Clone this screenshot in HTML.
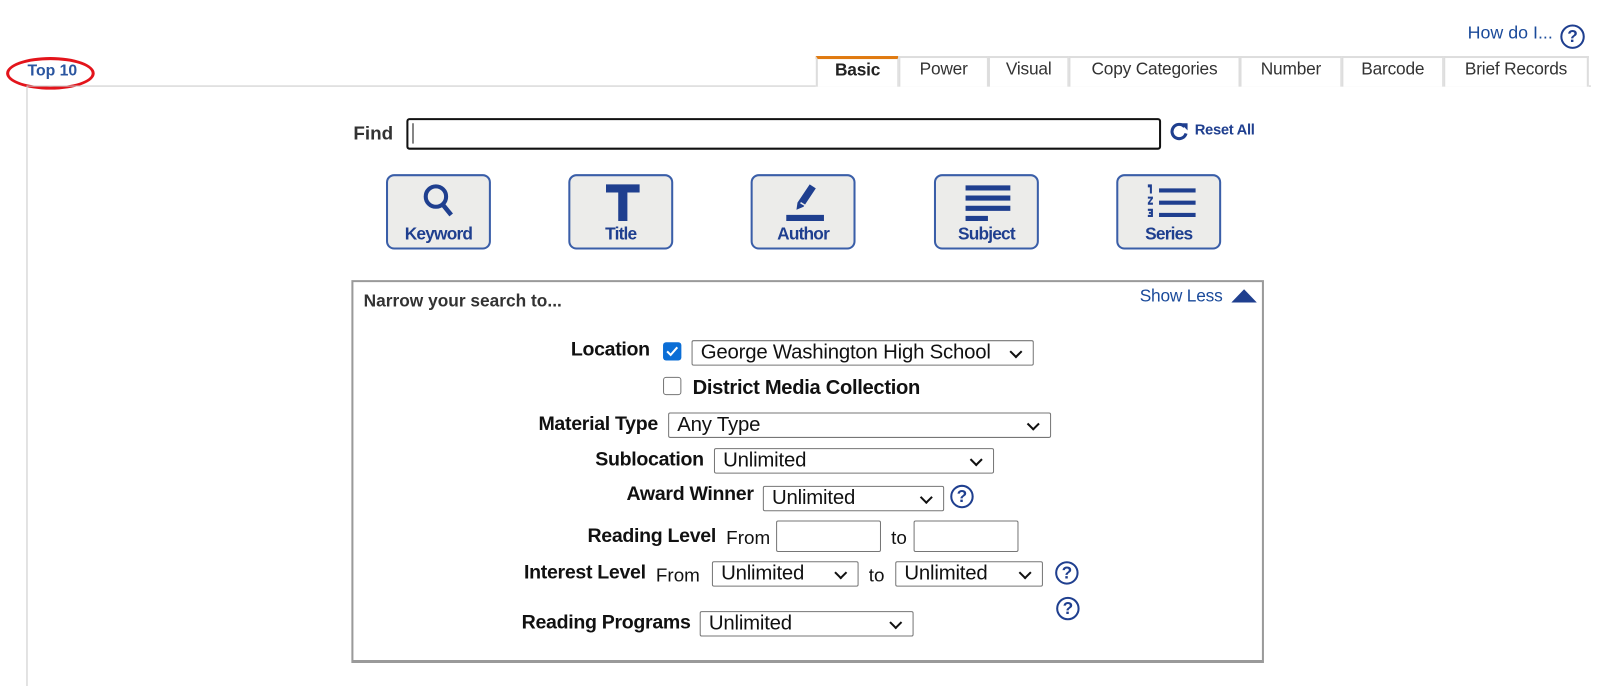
<!DOCTYPE html>
<html><head><meta charset="utf-8"><style>
*{box-sizing:border-box;margin:0;padding:0}
body{width:1597px;height:670px;background:#fff;font-family:"Liberation Sans",Arial,sans-serif;overflow:hidden;color:#000}
.w{position:relative;width:1568px;height:658px;transform:scale(1.01849);transform-origin:0 0}
.a{position:absolute;white-space:nowrap}
.tab{position:absolute;top:55px;height:30px;border:2px solid #ddd;border-bottom:none;background:#fff;font-size:17px;color:#333;text-align:center;line-height:22px;letter-spacing:-0.2px}
.btn{position:absolute;top:171px;width:103px;height:74px;border:2px solid #3a5ea8;border-radius:8px;background:#ececea}
.btn span{position:absolute;left:0;right:0;top:47px;text-align:center;font-weight:bold;font-size:17px;color:#1f3f8f;letter-spacing:-0.8px}
.btn svg{position:absolute;top:6px}
.lbl{position:absolute;font-weight:bold;font-size:19.2px;color:#111;white-space:nowrap;line-height:20px;text-align:right;letter-spacing:-0.3px}
.txt{position:absolute;font-size:18.5px;color:#111;white-space:nowrap;line-height:20px}
.sel{position:absolute;height:25px;border:1px solid #767676;border-radius:2px;background:#fff;font-size:20px;color:#111;padding-left:8px;line-height:23px;letter-spacing:-0.2px;overflow:hidden}
.sel::after{content:"";position:absolute;right:12px;top:6px;width:7px;height:7px;border-right:2px solid #111;border-bottom:2px solid #111;transform:rotate(45deg)}
.inp{position:absolute;height:31px;border:1px solid #767676;border-radius:2px;background:#fff}
.q{position:absolute;width:23px;height:23px;border:2px solid #1f3f8f;border-radius:50%;color:#1f3f8f;font-weight:bold;font-size:17px;text-align:center;line-height:19px}
</style></head><body><div class="w">
<div class="a" style="left:1441px;top:22px;font-size:17.5px;color:#1a4a9a">How do I...</div>
<div class="q" style="left:1532px;top:24px;width:24px;height:24px;line-height:20px">?</div>

<div class="a" style="left:6px;top:56px;width:87px;height:32px;border:3px solid #e3141b;border-radius:50%"></div>
<div class="a" style="left:27px;top:61px;font-size:15.5px;font-weight:bold;color:#2a55a0">Top 10</div>

<div class="a" style="left:26px;top:84px;width:1536px;height:1px;background:#c8c8c8"></div>
<div class="a" style="left:26px;top:84px;width:1px;height:590px;background:#c8c8c8"></div>

<div class="tab" style="left:801px;width:82px;border-top:3px solid #e07a10;font-weight:bold;color:#222;line-height:21px">Basic</div>
<div class="tab" style="left:882px;width:89px">Power</div>
<div class="tab" style="left:970px;width:80px">Visual</div>
<div class="tab" style="left:1049px;width:169px">Copy Categories</div>
<div class="tab" style="left:1217px;width:101px">Number</div>
<div class="tab" style="left:1317px;width:101px">Barcode</div>
<div class="tab" style="left:1417px;width:143px">Brief Records</div>

<div class="a" style="left:347px;top:120px;font-size:18.5px;font-weight:bold;color:#333">Find</div>
<div class="a" style="left:399px;top:116px;width:741px;height:31px;border:2px solid #111;border-radius:3px"></div>
<div class="a" style="left:405px;top:121px;width:1px;height:20px;background:#111"></div>
<svg class="a" style="left:1148px;top:119px" width="20" height="20" viewBox="0 0 20 20"><path d="M15 5.5A7 7 0 1 0 16.5 12" fill="none" stroke="#1f3f8f" stroke-width="3"/><path d="M11 2h7v7z" fill="#1f3f8f"/></svg>
<div class="a" style="left:1173px;top:120px;font-size:14.5px;font-weight:bold;color:#1f3f8f;letter-spacing:-0.3px">Reset All</div>

<div class="btn" style="left:379px"><svg style="left:32px" width="40" height="42" viewBox="0 0 40 42"><circle cx="15" cy="14" r="10" fill="none" stroke="#1f3f8f" stroke-width="4"/><path d="M21 21l9 11" stroke="#1f3f8f" stroke-width="4.5"/></svg><span>Keyword</span></div>
<div class="btn" style="left:558px"><svg style="left:34px" width="36" height="40" viewBox="0 0 36 40"><path d="M1 2h33v8H1zM13 2h9v36h-9z" fill="#1f3f8f"/></svg><span>Title</span></div>
<div class="btn" style="left:737px"><svg style="left:31px" width="42" height="42" viewBox="0 0 42 42"><path d="M2 32h37v6H2zM12 27l1-7 12-18 6 4-12 18z" fill="#1f3f8f"/><path d="M16 20l5 3" stroke="#ececea" stroke-width="1.5"/></svg><span>Author</span></div>
<div class="btn" style="left:917px"><svg style="left:29px" width="46" height="40" viewBox="0 0 46 40"><path d="M0 3h44v5H0zM0 13h44v5H0zM0 23h44v5H0zM0 33h22v5H0z" fill="#1f3f8f"/></svg><span>Subject</span></div>
<div class="btn" style="left:1096px"><svg style="left:28px" width="48" height="40" viewBox="0 0 48 40"><path d="M12 6h36v4H12zM12 18h36v4H12zM12 30h36v4H12zM1 2h4v9H3V5H1zM1 14h5v2l-3 4h3v2H1v-2l3-4H1zM1 26h5v8H1v-2h3v-1H2v-2h2v-1H1z" fill="#1f3f8f"/></svg><span>Series</span></div>

<div class="a" style="left:345px;top:275px;width:896px;height:376px;border:2px solid #9a9a9a;border-bottom-width:3px"></div>
<div class="a" style="left:357px;top:286px;font-size:17px;font-weight:bold;color:#333;line-height:20px">Narrow your search to...</div>
<div class="a" style="left:1119px;top:281px;font-size:17px;color:#1a4a9a;line-height:20px;letter-spacing:-0.2px">Show Less</div>
<svg class="a" style="left:1209px;top:283px" width="25" height="15"><path d="M0 14L12.5 1 25 14z" fill="#1f3f8f"/></svg>

<div class="lbl" style="right:930px;top:334px">Location</div>
<div class="a" style="left:651px;top:336px;width:18px;height:18px;background:#0b6ed6;border-radius:3px"></div>
<svg class="a" style="left:651px;top:336px" width="18" height="18"><path d="M4 9l3.5 3.5L14 5" fill="none" stroke="#fff" stroke-width="2"/></svg>
<div class="sel" style="left:679px;top:334px;width:336px">George Washington High School</div>
<div class="a" style="left:651px;top:370px;width:18px;height:18px;border:1px solid #767676;border-radius:3px"></div>
<div class="lbl" style="left:680px;top:371px;font-size:19.8px;text-align:left">District Media Collection</div>

<div class="lbl" style="right:922px;top:407px">Material Type</div>
<div class="sel" style="left:656px;top:405px;width:376px">Any Type</div>

<div class="lbl" style="right:877px;top:442px">Sublocation</div>
<div class="sel" style="left:701px;top:440px;width:275px">Unlimited</div>

<div class="lbl" style="right:828px;top:476px">Award Winner</div>
<div class="sel" style="left:749px;top:477px;width:178px">Unlimited</div>
<div class="q" style="left:933px;top:476px">?</div>

<div class="lbl" style="right:865px;top:517px">Reading Level</div>
<div class="txt" style="left:713px;top:518px">From</div>
<div class="inp" style="left:762px;top:511px;width:103px"></div>
<div class="txt" style="left:875px;top:518px">to</div>
<div class="inp" style="left:897px;top:511px;width:103px"></div>

<div class="lbl" style="right:934px;top:553px">Interest Level</div>
<div class="txt" style="left:644px;top:555px">From</div>
<div class="sel" style="left:699px;top:551px;width:144px">Unlimited</div>
<div class="txt" style="left:853px;top:555px">to</div>
<div class="sel" style="left:879px;top:551px;width:145px">Unlimited</div>
<div class="q" style="left:1036px;top:551px">?</div>
<div class="q" style="left:1037px;top:586px">?</div>

<div class="lbl" style="right:890px;top:602px">Reading Programs</div>
<div class="sel" style="left:687px;top:600px;width:210px">Unlimited</div>
</div></body></html>
